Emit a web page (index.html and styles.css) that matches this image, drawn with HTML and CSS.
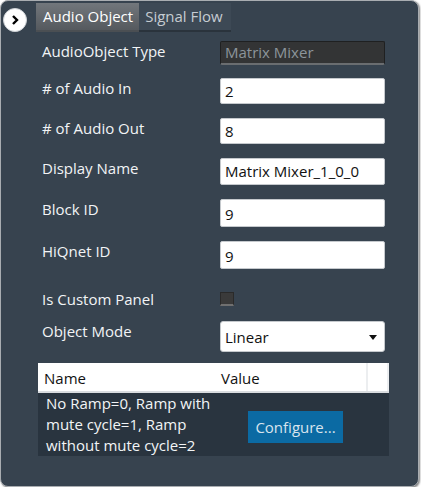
FILE: index.html
```html
<!DOCTYPE html>
<html lang="en">
<head>
    <meta charset="UTF-8">
    <title>Audio Object Properties</title>
    <link rel="stylesheet" href="styles.css">
</head>
<body>

    <div class="panel">
        <div class="top-bar">
            <div class="expand-btn">
                <svg width="12" height="12" viewBox="0 0 12 12"><path d="M4 2 L8 6 L4 10" fill="none" stroke="#000" stroke-width="2.4"/></svg>
            </div>
            <div class="tabs">
                <div class="tab active">Audio Object</div>
                <div class="tab">Signal Flow</div>
            </div>
        </div>

        <div class="form">
            <div class="label">AudioObject Type</div>
            <div class="field readonly">Matrix Mixer</div>

            <div class="label"># of Audio In</div>
            <div class="field">2</div>

            <div class="label"># of Audio Out</div>
            <div class="field">8</div>

            <div class="label">Display Name</div>
            <div class="field tall">Matrix Mixer_1_0_0</div>

            <div class="label">Block ID</div>
            <div class="field taller">9</div>

            <div class="label">HiQnet ID</div>
            <div class="field taller">9</div>

            <div class="label">Is Custom Panel</div>
            <div><div class="checkbox"></div></div>

            <div class="label">Object Mode</div>
            <div class="select">
                Linear
                <span class="arrow"></span>
            </div>
        </div>

        <div class="grid">
            <div class="grid-head">
                <div class="col-name">Name</div>
                <div class="col-value">Value</div>
                <div class="col-pad"></div>
                <div class="col-pad last"></div>
            </div>
            <div class="grid-row">
                <div class="row-text">No Ramp=0, Ramp with mute cycle=1, Ramp without mute cycle=2</div>
                <button class="configure">Configure...</button>
            </div>
        </div>
    </div>

</body>
</html>
```

FILE: styles.css
```css
* {
    margin: 0;
    padding: 0;
    box-sizing: border-box;
}

body {
    background: #ffffff;
    font-family: "Open Sans", "Noto Sans", sans-serif;
    font-size: 14px;
    color: #f2f4f6;
}

.panel {
    width: 419px;
    height: 487px;
    background: #37434f;
    border: 1px solid #a9adb1;
    border-radius: 8px;
    box-shadow: 1px 1px 2px rgba(0, 0, 0, 0.5);
    padding: 2px 0 0 2px;
}

.top-bar {
    display: flex;
    align-items: flex-start;
    height: 29px;
}

.expand-btn {
    width: 24px;
    height: 24px;
    margin-top: 5px;
    border-radius: 50%;
    background: #ffffff;
    border: 1px solid #cfd3d7;
    display: flex;
    justify-content: center;
    align-items: center;
}

.tabs {
    display: flex;
    margin-left: 9px;
    height: 29px;
}

.tab {
    padding: 0 8px 0 6px;
    line-height: 27px;
    font-size: 15px;
    color: #c6ccd2;
    background: #3d4955;
    border-bottom: 2px solid #2a333c;
}

.tab.active {
    background: linear-gradient(to bottom, #72777c, #55595e);
    color: #ffffff;
    border-bottom: 2px solid #4b4f53;
    padding: 0 6px 0 7px;
}

.form {
    display: grid;
    grid-template-columns: 178px 165px;
    grid-template-rows: 37px 40px 40px 41px 42px 48px 32px 42px;
    align-items: start;
    padding: 9px 0 0 39px;
}

.label {
    line-height: 21px;
    font-size: 15px;
    color: #f2f4f6;
}

.field {
    height: 26px;
    background: #ffffff;
    border: 1px solid #c5c9cd;
    border-radius: 2px;
    color: #111;
    font-size: 15px;
    line-height: 24px;
    padding-left: 4px;
}

.field.tall {
    height: 27px;
    line-height: 25px;
}

.field.taller {
    height: 28px;
    line-height: 28px;
}

.field.readonly {
    height: 24px;
    background: #333435;
    border: 1px solid #1f2021;
    border-bottom: 2px solid #6a6d70;
    color: #8c949b;
    line-height: 21px;
}

.checkbox {
    width: 14px;
    height: 14px;
    margin-top: 3px;
    background: #3a3a3a;
    border: 1px solid #2a2a2a;
    border-bottom: 2px solid #707070;
}

.select {
    position: relative;
    height: 31px;
    background: #ffffff;
    border: 1px solid #c5c9cd;
    border-radius: 3px;
    color: #111;
    font-size: 15px;
    line-height: 31px;
    padding-left: 4px;
}

.arrow {
    position: absolute;
    right: 7px;
    top: 13px;
    width: 0;
    height: 0;
    border-left: 4px solid transparent;
    border-right: 4px solid transparent;
    border-top: 5px solid #111;
}

.grid {
    margin-left: 35px;
    width: 351px;
}

.grid-head {
    display: flex;
    height: 30px;
    background: #ffffff;
    border-bottom: 2px solid #d9dcdf;
    color: #111;
    font-size: 15px;
    line-height: 30px;
}

.col-name {
    width: 177px;
    padding-left: 6px;
}

.col-value {
    width: 151px;
    padding-left: 6px;
}

.col-pad {
    width: 21px;
    border-left: 2px solid #eceef0;
}

.col-pad.last {
    width: 2px;
    border-left: 2px solid #eceef0;
}

.grid-row {
    display: flex;
    align-items: center;
    height: 63px;
    background: #29343f;
    padding-left: 8px;
}

.row-text {
    width: 192px;
    font-size: 15px;
    line-height: 21px;
    color: #f2f4f6;
}

.configure {
    margin-left: 10px;
    margin-top: 5px;
    width: 95px;
    height: 32px;
    background: #0b6aa3;
    border: none;
    color: #d8e4ee;
    font-family: "Open Sans", "Noto Sans", sans-serif;
    font-size: 15px;
}
```
